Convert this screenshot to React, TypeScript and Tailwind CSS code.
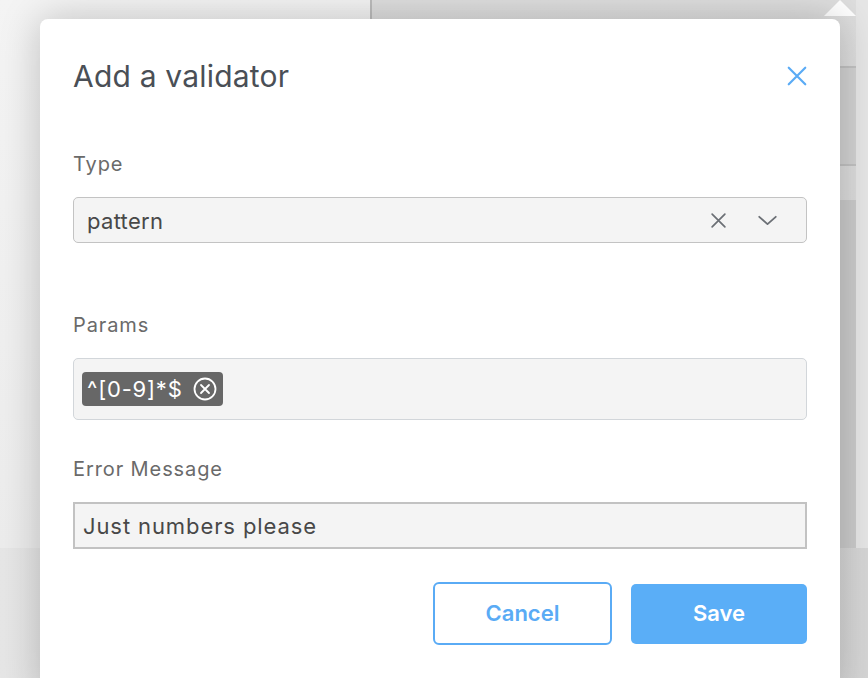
import React from 'react';

const CloseIcon = ({ className }: { className?: string }) => (
  <svg viewBox="0 0 24 24" className={className} fill="none" stroke="currentColor" strokeWidth="2.4" strokeLinecap="round">
    <path d="M3 3L21 21M21 3L3 21" />
  </svg>
);

const ChevronIcon = ({ className }: { className?: string }) => (
  <svg viewBox="0 0 22 12" className={className} fill="none" stroke="currentColor" strokeWidth="2" strokeLinecap="round" strokeLinejoin="round">
    <path d="M2 2L11 10L20 2" />
  </svg>
);

const CircleX = () => (
  <svg viewBox="0 0 24 24" className="w-[24px] h-[24px]" fill="none" stroke="white" strokeWidth="1.8" strokeLinecap="round">
    <circle cx="12" cy="12" r="10.5" />
    <path d="M8 8L16 16M16 8L8 16" />
  </svg>
);

export default function App() {
  return (
    <div
      className="relative w-[868px] h-[678px] overflow-hidden"
      style={{ fontFamily: 'Inter, "Noto Sans", sans-serif' }}
    >
      {/* page behind the overlay */}
      <div className="flex flex-col h-full">
        <div className="flex h-[548px]">
          <div className="w-[372px] bg-gradient-to-b from-[#f4f4f4] to-[#ececec] border-r-2 border-[#bcbcbc]" />
          <div className="flex-1 bg-gradient-to-b from-[#dedede] to-[#d8d8d8] flex justify-end">
            <div className="w-[16px] flex flex-col">
              <div className="h-[68px] border-b-2 border-[#c2c2c2]" />
              <div className="h-[98px] bg-[#d2d2d2] border-b-2 border-[#c2c2c2]" />
              <div className="h-[34px]" />
              <div className="flex-1 bg-[#cbcbcb]" />
            </div>
            <div className="w-[12px] bg-[#e6e6e6]" />
          </div>
        </div>
        <div className="flex-1 bg-gradient-to-r from-[#e6e6e6] to-[#d6d6d6]" />
      </div>

      {/* tooltip arrow */}
      <div className="absolute left-[824px] top-0 w-0 h-0 border-l-[16px] border-r-[16px] border-b-[16px] border-l-transparent border-r-transparent border-b-white" />

      {/* dialog */}
      <div className="absolute left-[40px] top-[19px] w-[800px] h-[680px] bg-white rounded-[8px] shadow-[0_0_40px_rgba(0,0,0,0.22)] pl-[33px] pr-[33px] pt-[37px]">
        <div className="flex items-center justify-between h-[40px]">
          <h1 className="text-[30px] leading-[40px] text-[#4a4f56] tracking-[0.2px]">Add a validator</h1>
          <button className="text-[#5aabf5] mr-[-1px]">
            <CloseIcon className="w-[22px] h-[22px]" />
          </button>
        </div>

        <div className="mt-[56px] text-[20px] leading-[24px] tracking-[0.9px] text-[#6a6a6a]">Type</div>
        <div className="mt-[21px] h-[46px] flex items-center bg-[#f4f4f4] border-[1.5px] border-[#c3c3c3] rounded-[5px] pl-[13px] pr-[28px]">
          <span className="flex-1 text-[22px] tracking-[0.3px] text-[#484848] pt-[3px]">pattern</span>
          <CloseIcon className="w-[17px] h-[17px] text-[#6b6f75] mr-[30px]" />
          <ChevronIcon className="w-[21px] h-[11px] text-[#6b6f75]" />
        </div>

        <div className="mt-[70px] text-[20px] leading-[24px] tracking-[0.9px] text-[#6a6a6a]">Params</div>
        <div className="mt-[21px] h-[62px] flex items-center bg-[#f4f4f4] border-[1.5px] border-[#d2d6da] rounded-[5px] pl-[8px]">
          <span className="h-[34px] flex items-center gap-[10px] bg-[#676767] rounded-[4px] pl-[5px] pr-[6px] text-[22px] tracking-[0.8px] text-white">
            ^[0-9]*$
            <CircleX />
          </span>
        </div>

        <div className="mt-[37px] text-[20px] leading-[24px] tracking-[0.9px] text-[#6a6a6a]">Error Message</div>
        <div className="mt-[21px] h-[47px] flex items-center bg-[#f4f4f4] border-2 border-[#c2c2c2] pl-[8px]">
          <span className="text-[22px] tracking-[0.9px] text-[#484848] pt-[2px]">Just numbers please</span>
        </div>

        <div className="mt-[33px] flex justify-end items-center gap-[19px]">
          <button className="w-[179px] h-[63px] border-2 border-[#5aabf5] rounded-[6px] text-[22px] font-semibold text-[#5aabf5]">
            Cancel
          </button>
          <button className="w-[176px] h-[60px] bg-[#5aaef7] rounded-[5px] text-[22px] font-semibold text-white">
            Save
          </button>
        </div>
      </div>
    </div>
  );
}
